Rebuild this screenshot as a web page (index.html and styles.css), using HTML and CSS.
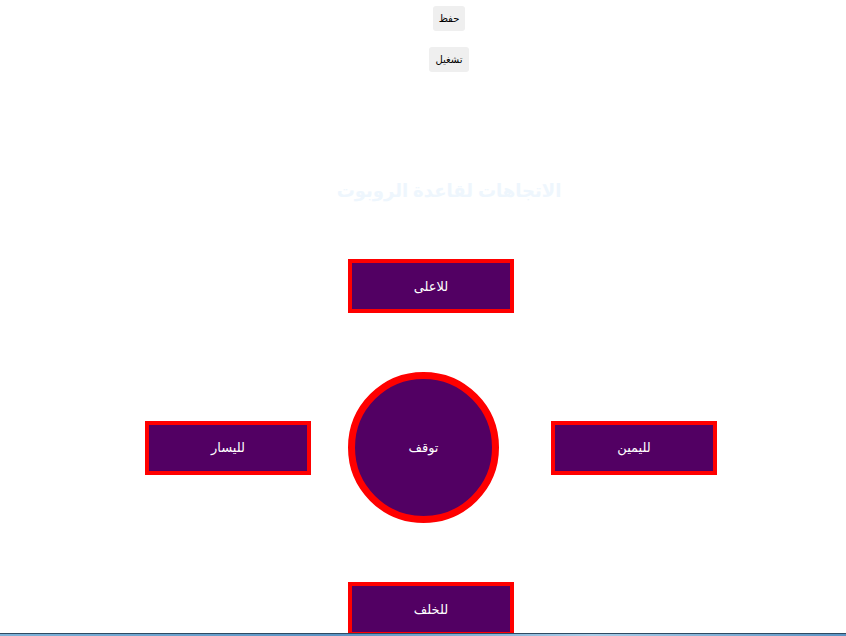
FILE: index.html
```html
<!DOCTYPE html>
<html lang="ar">
<head>
<meta charset="utf-8">
<title>الاتجاهات لقاعدة الروبوت</title>
<link rel="stylesheet" href="styles.css">
</head>
<body>
<div class="top">
  <button class="small-btn">حفظ</button>
  <button class="small-btn">تشغيل</button>
  <h1 class="title">الاتجاهات لقاعدة الروبوت</h1>
</div>
<div class="pad">
  <span class="cell"></span>
  <button class="dir">للاعلى</button>
  <span class="cell"></span>
  <button class="dir">لليسار</button>
  <button class="stop">توقف</button>
  <button class="dir">لليمين</button>
  <span class="cell"></span>
  <button class="dir">للخلف</button>
  <span class="cell"></span>
</div>
<div class="taskbar"></div>
</body>
</html>
```
FILE: styles.css
```css
html, body {
  margin: 0;
  padding: 0;
  background: #fff;
  font-family: "Liberation Sans", "DejaVu Sans", Arial, sans-serif;
  overflow: hidden;
  height: 636px;
}
.top {
  display: flex;
  flex-direction: column;
  align-items: center;
  padding-top: 6px;
  padding-left: 52px;
  gap: 16px;
}
.small-btn {
  height: 25px;
  padding: 0 6px;
  border: none;
  border-radius: 3px;
  background: #efefef;
  color: #000;
  font-family: "Liberation Sans", "DejaVu Sans", Arial, sans-serif;
  font-size: 10px;
}
.title {
  margin: 92px 0 0;
  font-size: 18px;
  line-height: 23px;
  font-weight: bold;
  color: #eef6fd;
  direction: rtl;
}
.pad {
  display: grid;
  grid-template-columns: repeat(3, 166px);
  column-gap: 37px;
  row-gap: 59px;
  align-items: center;
  justify-items: start;
  margin: 56px 0 0 145px;
}
.dir {
  width: 166px;
  height: 54px;
  border: 4px solid #ff0000;
  background: #520063;
  color: #fff;
  font-family: "Liberation Sans", "DejaVu Sans", Arial, sans-serif;
  font-size: 13px;
  padding: 0;
}
.stop {
  width: 151px;
  height: 151px;
  border-radius: 50%;
  border: 7px solid #ff0000;
  background: #520063;
  color: #fff;
  font-family: "Liberation Sans", "DejaVu Sans", Arial, sans-serif;
  font-size: 13px;
  padding: 0;
}
.taskbar {
  position: fixed;
  left: 0;
  right: 0;
  bottom: 0;
  height: 2px;
  border-top: 1px solid #2f4a62;
  background: linear-gradient(90deg, #7fb3d9, #5a93c4 40%, #a9cde8 70%, #5a93c4);
}
```
